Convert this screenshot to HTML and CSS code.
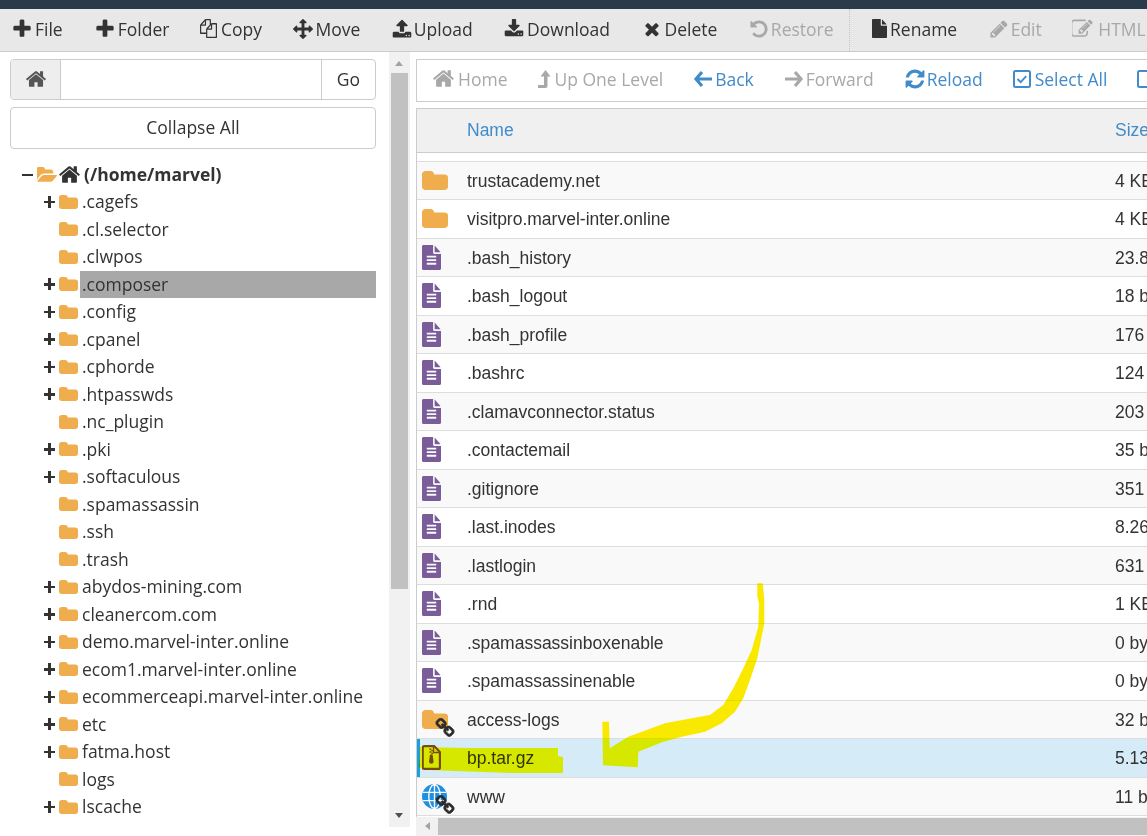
FILE: index.html
```html
<!DOCTYPE html>
<html lang="en">
<head>
    <meta charset="UTF-8">
    <meta name="viewport" content="width=device-width, initial-scale=1.0">
    <title>File Manager</title>
    <link rel="stylesheet" href="styles.css">
</head>
<body>

<!-- Icon sprite -->
<svg class="sprite" xmlns="http://www.w3.org/2000/svg">
    <symbol id="i-plus" viewBox="0 0 1792 1792"><path d="M1600 736v192q0 40-28 68t-68 28h-416v416q0 40-28 68t-68 28h-192q-40 0-68-28t-28-68v-416h-416q-40 0-68-28t-28-68v-192q0-40 28-68t68-28h416v-416q0-40 28-68t68-28h192q40 0 68 28t28 68v416h416q40 0 68 28t28 68z"/></symbol>
    <symbol id="i-copy" viewBox="0 0 1792 1792" preserveAspectRatio="none"><path d="M1696 384q40 0 68 28t28 68v1216q0 40-28 68t-68 28h-960q-40 0-68-28t-28-68v-288h-544q-40 0-68-28t-28-68v-672q0-40 20-88t48-76l408-408q28-28 76-48t88-20h416q40 0 68 28t28 68v328q68-40 128-40h416zm-544 213l-299 299h299v-299zm-640-384l-299 299h299v-299zm196 647l316-316v-416h-384v416q0 40-28 68t-68 28h-416v640h512v-256q0-40 20-88t48-76zm956 804v-1152h-384v416q0 40-28 68t-68 28h-416v640h896z"/></symbol>
    <symbol id="i-move" viewBox="0 0 1792 1792"><path d="M1792 896q0 26-19 45l-256 256q-19 19-45 19t-45-19-19-45v-128h-384v384h128q26 0 45 19t19 45-19 45l-256 256q-19 19-45 19t-45-19l-256-256q-19-19-19-45t19-45 45-19h128v-384h-384v128q0 26-19 45t-45 19-45-19l-256-256q-19-19-19-45t19-45l256-256q19-19 45-19t45 19 19 45v128h384v-384h-128q-26 0-45-19t-19-45 19-45l256-256q19-19 45-19t45 19l256 256q19 19 19 45t-19 45-45 19h-128v384h384v-128q0-26 19-45t45-19 45 19l256 256q19 19 19 45z"/></symbol>
    <symbol id="i-upload" viewBox="0 0 1792 1792"><path d="M1344 1472q0-26-19-45t-45-19-45 19-19 45 19 45 45 19 45-19 19-45zm256 0q0-26-19-45t-45-19-45 19-19 45 19 45 45 19 45-19 19-45zm128-224v320q0 40-28 68t-68 28h-1472q-40 0-68-28t-28-68v-320q0-40 28-68t68-28h427q21 56 70.500 92t110.500 36h256q61 0 110.500-36t70.500-92h427q40 0 68 28t28 68zm-325-648q-17 40-59 40h-256v448q0 26-19 45t-45 19h-256q-26 0-45-19t-19-45v-448h-256q-42 0-59-40-17-39 14-69l448-448q18-19 45-19t45 19l448 448q31 30 14 69z"/></symbol>
    <symbol id="i-download" viewBox="0 0 1792 1792"><path d="M1344 1344q0-26-19-45t-45-19-45 19-19 45 19 45 45 19 45-19 19-45zm256 0q0-26-19-45t-45-19-45 19-19 45 19 45 45 19 45-19 19-45zm128-224v320q0 40-28 68t-68 28h-1472q-40 0-68-28t-28-68v-320q0-40 28-68t68-28h465l135 136q58 56 136 56t136-56l136-136h464q40 0 68 28t28 68zm-325-569q17 41-14 70l-448 448q-18 19-45 19t-45-19l-448-448q-31-29-14-70 17-39 59-39h256v-448q0-26 19-45t45-19h256q26 0 45 19t19 45v448h256q42 0 59 39z"/></symbol>
    <symbol id="i-times" viewBox="0 0 1792 1792"><path d="M1490 1322q0 40-28 68l-136 136q-28 28-68 28t-68-28l-294-294-294 294q-28 28-68 28t-68-28l-136-136q-28-28-28-68t28-68l294-294-294-294q-28-28-28-68t28-68l136-136q28-28 68-28t68 28l294 294 294-294q28-28 68-28t68 28l136 136q28 28 28 68t-28 68l-294 294 294 294q28 28 28 68z"/></symbol>
    <symbol id="i-undo" viewBox="0 0 1792 1792"><path d="M1664 896q0 156-61 298t-164 245-245 164-298 61q-172 0-327-72.500t-264-204.500q-7-10-6.500-22.500t8.500-20.500l137-138q10-9 25-9 16 2 23 12 73 95 179 147t225 52q104 0 198.500-40.500t163.500-109.500 109.500-163.500 40.500-198.500-40.500-198.500-109.500-163.500-163.500-109.500-198.500-40.500q-98 0-188 35.500t-160 101.500l137 138q31 30 14 69-17 40-59 40h-448q-26 0-45-19t-19-45v-448q0-42 40-59 39-17 69 14l130 129q107-101 244.500-156.500t284.500-55.500q156 0 298 61t245 164 164 245 61 298z"/></symbol>
    <symbol id="i-file" viewBox="128 0 1536 1792" preserveAspectRatio="none"><path d="M1152 512v-472q22 14 36 28l408 408q14 14 28 36h-472zm-128 32q0 40 28 68t68 28h544v1056q0 40-28 68t-68 28h-1344q-40 0-68-28t-28-68v-1600q0-40 28-68t68-28h800v544z"/></symbol>
    <symbol id="i-pencil" viewBox="0 0 1792 1792"><path d="M491 1536l91-91-235-235-91 91v107h128v128h107zm523-928q0-22-22-22-10 0-17 7l-542 542q-7 7-7 17 0 22 22 22 10 0 17-7l542-542q7-7 7-17zm-54-192l416 416-832 832h-416v-416zm683 96q0 53-37 90l-166 166-416-416 166-165q36-38 90-38 53 0 91 38l235 234q37 39 37 91z"/></symbol>
    <symbol id="i-edit" viewBox="100 100 1800 1600"><path d="M888 1184l116-116-152-152-116 116v56h96v96h56zm440-720q-16-16-33 1l-350 350q-17 17-1 33t33-1l350-350q17-17 1-33zm80 594v190q0 119-84.500 203.500t-203.500 84.500h-832q-119 0-203.500-84.500t-84.500-203.500v-832q0-119 84.500-203.500t203.500-84.500h832q63 0 117 25 15 7 18 23 3 17-9 29l-49 49q-14 14-32 8-23-6-45-6h-832q-66 0-113 47t-47 113v832q0 66 47 113t113 47h832q66 0 113-47t47-113v-126q0-13 9-22l64-64q15-15 35-7t20 29zm-96-738l288 288-672 672h-288v-288zm444 132l-92 92-288-288 92-92q28-28 68-28t68 28l152 152q28 28 28 68t-28 68z"/></symbol>
    <symbol id="i-home" viewBox="0 0 1792 1792"><path d="M1472 992v480q0 26-19 45t-45 19h-384v-384h-256v384h-384q-26 0-45-19t-19-45v-480q0-1 .5-3t.5-3l575-474 575 474q1 2 1 6zm223-69l-62 74q-8 9-21 11h-3q-13 0-21-7l-692-577-692 577q-12 8-24 7-13-2-21-11l-62-74q-8-10-7-23.500t11-21.500l719-599q32-26 76-26t76 26l244 204v-195q0-14 9-23t23-9h192q14 0 23 9t9 23v408l219 182q10 8 11 21.500t-7 23.500z"/></symbol>
    <symbol id="i-level" viewBox="0 0 14 18"><path d="M8.500 0l5 6.500h-3v9.500q0 2-2 2h-7.500v-3h6v-8.500h-3.500z"/></symbol>
    <symbol id="i-left" viewBox="0 0 20 20"><path d="M9 3l-6 7 6 7M4 10h15" fill="none" stroke="currentColor" stroke-width="3.200"/></symbol>
    <symbol id="i-right" viewBox="0 0 20 20"><path d="M11 3l6 7-6 7M16 10h-15" fill="none" stroke="currentColor" stroke-width="3.200"/></symbol>
    <symbol id="i-reload" viewBox="0 0 1792 1792"><path d="M1639 1056q0 5-1 7-64 268-268 434.500t-478 166.500q-146 0-282.500-55t-243.500-157l-129 129q-19 19-45 19t-45-19-19-45v-448q0-26 19-45t45-19h448q26 0 45 19t19 45-19 45l-137 137q71 66 161 102t187 36q134 0 250-65t186-179q11-17 53-117 8-23 30-23h192q13 0 22.500 9.500t9.500 22.500zm25-800v448q0 26-19 45t-45 19h-448q-26 0-45-19t-19-45 19-45l138-138q-148-137-349-137-134 0-250 65t-186 179q-11 17-53 117-8 23-30 23h-199q-13 0-22.500-9.500t-9.500-22.500v-7q65-268 270-434.500t480-166.500q146 0 284 55.500t245 156.500l130-129q19-19 45-19t45 19 19 45z"/></symbol>
    <symbol id="i-check" viewBox="0 0 18 18"><rect x="1" y="1" width="16" height="16" rx="1.500" fill="none" stroke="currentColor" stroke-width="2"/><path d="M4.500 9l3.200 3.200 5.500-6" fill="none" stroke="currentColor" stroke-width="1.800"/></symbol>
    <symbol id="i-square" viewBox="0 0 18 18"><rect x="1" y="1" width="16" height="16" rx="1.500" fill="none" stroke="currentColor" stroke-width="2"/></symbol>
    <symbol id="i-folder" viewBox="64 128 1664 1408" preserveAspectRatio="none"><path d="M1728 608v704q0 92-66 158t-158 66h-1216q-92 0-158-66t-66-158v-960q0-92 66-158t158-66h320q92 0 158 66t66 158v32h672q92 0 158 66t66 158z"/></symbol>
    <symbol id="i-folder-open" viewBox="0 128 1845 1408" preserveAspectRatio="none"><path d="M1845 931q0 35-35 73l-336 396q-43 51-120.500 86.500t-143.500 35.500h-1088q-34 0-60.500-13t-26.500-43q0-35 35-73l336-396q43-51 120.500-86.500t143.500-35.500h1088q34 0 60.500 13t26.500 43zm-343-344v160h-832q-94 0-197 47.500t-164 119.500l-337 396-5 6q0-4-.5-12.500t-.5-12.500v-960q0-92 66-158t158-66h320q92 0 158 66t66 158v32h544q92 0 158 66t66 158z"/></symbol>
    <symbol id="i-doc" viewBox="128 0 1536 1792" preserveAspectRatio="none"><path d="M1596 476q14 14 28 36h-472v-472q22 14 36 28zm-476 164h544v1056q0 40-28 68t-68 28h-1344q-40 0-68-28t-28-68v-1600q0-40 28-68t68-28h800v544q0 40 28 68t68 28zm160 736v-64q0-14-9-23t-23-9h-704q-14 0-23 9t-9 23v64q0 14 9 23t23 9h704q14 0 23-9t9-23zm0-256v-64q0-14-9-23t-23-9h-704q-14 0-23 9t-9 23v64q0 14 9 23t23 9h704q14 0 23-9t9-23zm0-256v-64q0-14-9-23t-23-9h-704q-14 0-23 9t-9 23v64q0 14 9 23t23 9h704q14 0 23-9t9-23z"/></symbol>
    <symbol id="i-link" viewBox="0 0 1792 1792"><path stroke="currentColor" stroke-width="70" d="M1520 1216q0-40-28-68l-208-208q-28-28-68-28-42 0-72 32 3 3 19 18.500t21.500 21.500 15 19 13 25.500 3.500 27.500q0 40-28 68t-68 28q-15 0-27.500-3.500t-25.500-13-19-15-21.500-21.500-18.500-19q-33 31-33 73 0 40 28 68l206 207q27 27 68 27 40 0 68-26l147-146q28-28 28-67zm-703-705q0-40-28-68l-206-207q-28-28-68-28-39 0-68 27l-147 146q-28 28-28 67 0 40 28 68l208 208q27 27 68 27 42 0 72-31-3-3-19-18.500t-21.500-21.500-15-19-13-25.500-3.500-27.500q0-40 28-68t68-28q15 0 27.500 3.500t25.500 13 19 15 21.500 21.500 18.500 19q33-31 33-73zm895 705q0 120-85 203l-147 146q-83 83-203 83-121 0-204-85l-206-207q-83-83-83-203 0-123 88-209l-88-88q-86 88-208 88-120 0-204-84l-208-208q-84-84-84-204t85-203l147-146q83-83 203-83 121 0 204 85l206 207q83 83 83 203 0 123-88 209l88 88q86-88 208-88 120 0 204 84l208 208q84 84 84 204z"/></symbol>
    <symbol id="i-globe" viewBox="0 0 24 24"><circle cx="12" cy="12" r="12"/><g fill="none" stroke="#fff" stroke-width="1.300"><ellipse cx="12" cy="12" rx="5.500" ry="11.500"/><path d="M12 0v24M1 8h22M1 16h22"/></g></symbol>
    <symbol id="i-zip" viewBox="0 0 19 25"><path d="M2.200 1.100h10l5.700 6v15.300a1.500 1.500 0 0 1-1.500 1.500h-14.200a1.500 1.500 0 0 1-1.500-1.500v-19.800a1.500 1.500 0 0 1 1.500-1.500z" fill="none" stroke="currentColor" stroke-width="2.200"/><path d="M11.500 1.500v6h6" fill="none" stroke="currentColor" stroke-width="1.400"/><path d="M7.500 3.500h1.800v1.400h-1.800zM9.300 4.900h1.800v1.400h-1.800zM7.500 6.300h1.800v1.400h-1.800zM9.300 7.700h1.800v1.400h-1.800zM8 9.500h2.600l1 7a2.300 2.300 0 0 1-4.600 0z"/></symbol>
</svg>

<div class="topbar"></div>

<div class="toolbar">
    <a class="tool"><svg class="tool-plus"><use href="#i-plus"/></svg>File</a>
    <a class="tool"><svg class="tool-plus"><use href="#i-plus"/></svg>Folder</a>
    <a class="tool gap-4"><svg class="tool-copy"><use href="#i-copy"/></svg>Copy</a>
    <a class="tool"><svg class="tool-icon"><use href="#i-move"/></svg>Move</a>
    <a class="tool"><svg class="tool-icon"><use href="#i-upload"/></svg>Upload</a>
    <a class="tool gap-3"><svg class="tool-icon"><use href="#i-download"/></svg>Download</a>
    <a class="tool gap-3"><svg class="tool-icon"><use href="#i-times"/></svg>Delete</a>
    <a class="tool disabled"><svg class="tool-icon"><use href="#i-undo"/></svg>Restore</a>
    <span class="tool-sep"></span>
    <a class="tool gap-3"><svg class="tool-file"><use href="#i-file"/></svg>Rename</a>
    <a class="tool disabled"><svg class="tool-icon"><use href="#i-pencil"/></svg>Edit</a>
    <a class="tool gap-4 disabled"><svg class="tool-edit"><use href="#i-edit"/></svg>HTML Editor</a>
</div>

<div class="main">
    <div class="sidebar">
        <div class="path-box">
            <span class="path-home"><svg class="home-icon"><use href="#i-home"/></svg></span>
            <span class="path-input"></span>
            <span class="path-go">Go</span>
        </div>
        <div class="collapse-btn">Collapse All</div>

        <!-- Directory tree -->
        <div class="tree">
            <div class="tree-row tree-root"><span class="toggle toggle-open"></span><svg class="tree-folder-open"><use href="#i-folder-open"/></svg><svg class="tree-home"><use href="#i-home"/></svg><span class="tree-label">(/home/marvel)</span></div>
            <div class="tree-row"><span class="toggle"></span><svg class="tree-folder"><use href="#i-folder"/></svg><span class="tree-label">.cagefs</span></div>
            <div class="tree-row"><span class="toggle none"></span><svg class="tree-folder"><use href="#i-folder"/></svg><span class="tree-label">.cl.selector</span></div>
            <div class="tree-row"><span class="toggle none"></span><svg class="tree-folder"><use href="#i-folder"/></svg><span class="tree-label">.clwpos</span></div>
            <div class="tree-row"><span class="toggle"></span><svg class="tree-folder"><use href="#i-folder"/></svg><span class="tree-label selected">.composer</span></div>
            <div class="tree-row"><span class="toggle"></span><svg class="tree-folder"><use href="#i-folder"/></svg><span class="tree-label">.config</span></div>
            <div class="tree-row"><span class="toggle"></span><svg class="tree-folder"><use href="#i-folder"/></svg><span class="tree-label">.cpanel</span></div>
            <div class="tree-row"><span class="toggle"></span><svg class="tree-folder"><use href="#i-folder"/></svg><span class="tree-label">.cphorde</span></div>
            <div class="tree-row"><span class="toggle"></span><svg class="tree-folder"><use href="#i-folder"/></svg><span class="tree-label">.htpasswds</span></div>
            <div class="tree-row"><span class="toggle none"></span><svg class="tree-folder"><use href="#i-folder"/></svg><span class="tree-label">.nc_plugin</span></div>
            <div class="tree-row"><span class="toggle"></span><svg class="tree-folder"><use href="#i-folder"/></svg><span class="tree-label">.pki</span></div>
            <div class="tree-row"><span class="toggle"></span><svg class="tree-folder"><use href="#i-folder"/></svg><span class="tree-label">.softaculous</span></div>
            <div class="tree-row"><span class="toggle none"></span><svg class="tree-folder"><use href="#i-folder"/></svg><span class="tree-label">.spamassassin</span></div>
            <div class="tree-row"><span class="toggle none"></span><svg class="tree-folder"><use href="#i-folder"/></svg><span class="tree-label">.ssh</span></div>
            <div class="tree-row"><span class="toggle none"></span><svg class="tree-folder"><use href="#i-folder"/></svg><span class="tree-label">.trash</span></div>
            <div class="tree-row"><span class="toggle"></span><svg class="tree-folder"><use href="#i-folder"/></svg><span class="tree-label">abydos-mining.com</span></div>
            <div class="tree-row"><span class="toggle"></span><svg class="tree-folder"><use href="#i-folder"/></svg><span class="tree-label">cleanercom.com</span></div>
            <div class="tree-row"><span class="toggle"></span><svg class="tree-folder"><use href="#i-folder"/></svg><span class="tree-label">demo.marvel-inter.online</span></div>
            <div class="tree-row"><span class="toggle"></span><svg class="tree-folder"><use href="#i-folder"/></svg><span class="tree-label">ecom1.marvel-inter.online</span></div>
            <div class="tree-row"><span class="toggle"></span><svg class="tree-folder"><use href="#i-folder"/></svg><span class="tree-label">ecommerceapi.marvel-inter.online</span></div>
            <div class="tree-row"><span class="toggle"></span><svg class="tree-folder"><use href="#i-folder"/></svg><span class="tree-label">etc</span></div>
            <div class="tree-row"><span class="toggle"></span><svg class="tree-folder"><use href="#i-folder"/></svg><span class="tree-label">fatma.host</span></div>
            <div class="tree-row"><span class="toggle none"></span><svg class="tree-folder"><use href="#i-folder"/></svg><span class="tree-label">logs</span></div>
            <div class="tree-row"><span class="toggle"></span><svg class="tree-folder"><use href="#i-folder"/></svg><span class="tree-label">lscache</span></div>
        </div>
    </div>

    <div class="vscroll">
        <span class="arrow-up"></span>
        <span class="vscroll-thumb"></span>
        <span class="arrow-down"></span>
    </div>

    <div class="content">
        <div class="navbar">
            <a class="nav disabled gap-3"><svg class="nav-home"><use href="#i-home"/></svg>Home</a>
            <a class="nav disabled gap-3"><svg class="nav-level"><use href="#i-level"/></svg>Up One Level</a>
            <a class="nav"><svg class="nav-arrow"><use href="#i-left"/></svg>Back</a>
            <a class="nav disabled"><svg class="nav-arrow"><use href="#i-right"/></svg>Forward</a>
            <a class="nav gap-1"><svg class="nav-reload"><use href="#i-reload"/></svg>Reload</a>
            <a class="nav gap-4"><svg class="nav-box"><use href="#i-check"/></svg>Select All</a>
            <a class="nav gap-3"><svg class="nav-box"><use href="#i-square"/></svg>Unselect All</a>
        </div>

        <div class="list-head"><span class="col-name">Name</span><span class="col-size">Size</span></div>

        <!-- File list -->
        <div class="list">
            <div class="row"><span class="col-icon"><svg class="ico-folder"><use href="#i-folder"/></svg></span><span class="col-name">trustacademy.net</span><span class="col-size">4 KB</span></div>
            <div class="row"><span class="col-icon"><svg class="ico-folder"><use href="#i-folder"/></svg></span><span class="col-name">visitpro.marvel-inter.online</span><span class="col-size">4 KB</span></div>
            <div class="row"><span class="col-icon"><svg class="ico-doc"><use href="#i-doc"/></svg></span><span class="col-name">.bash_history</span><span class="col-size">23.81 KB</span></div>
            <div class="row"><span class="col-icon"><svg class="ico-doc"><use href="#i-doc"/></svg></span><span class="col-name">.bash_logout</span><span class="col-size">18 bytes</span></div>
            <div class="row"><span class="col-icon"><svg class="ico-doc"><use href="#i-doc"/></svg></span><span class="col-name">.bash_profile</span><span class="col-size">176 bytes</span></div>
            <div class="row"><span class="col-icon"><svg class="ico-doc"><use href="#i-doc"/></svg></span><span class="col-name">.bashrc</span><span class="col-size">124 bytes</span></div>
            <div class="row"><span class="col-icon"><svg class="ico-doc"><use href="#i-doc"/></svg></span><span class="col-name">.clamavconnector.status</span><span class="col-size">203 bytes</span></div>
            <div class="row"><span class="col-icon"><svg class="ico-doc"><use href="#i-doc"/></svg></span><span class="col-name">.contactemail</span><span class="col-size">35 bytes</span></div>
            <div class="row"><span class="col-icon"><svg class="ico-doc"><use href="#i-doc"/></svg></span><span class="col-name">.gitignore</span><span class="col-size">351 bytes</span></div>
            <div class="row"><span class="col-icon"><svg class="ico-doc"><use href="#i-doc"/></svg></span><span class="col-name">.last.inodes</span><span class="col-size">8.26 KB</span></div>
            <div class="row"><span class="col-icon"><svg class="ico-doc"><use href="#i-doc"/></svg></span><span class="col-name">.lastlogin</span><span class="col-size">631 bytes</span></div>
            <div class="row"><span class="col-icon"><svg class="ico-doc"><use href="#i-doc"/></svg></span><span class="col-name">.rnd</span><span class="col-size">1 KB</span></div>
            <div class="row"><span class="col-icon"><svg class="ico-doc"><use href="#i-doc"/></svg></span><span class="col-name">.spamassassinboxenable</span><span class="col-size">0 bytes</span></div>
            <div class="row"><span class="col-icon"><svg class="ico-doc"><use href="#i-doc"/></svg></span><span class="col-name">.spamassassinenable</span><span class="col-size">0 bytes</span></div>
            <div class="row"><span class="col-icon"><svg class="ico-folder"><use href="#i-folder"/></svg><svg class="ico-link"><use href="#i-link"/></svg></span><span class="col-name">access-logs</span><span class="col-size">32 bytes</span></div>
            <div class="row row-active"><span class="col-icon"><svg class="ico-zip"><use href="#i-zip"/></svg></span><span class="col-name">bp.tar.gz</span><span class="col-size">5.13 GB</span></div>
            <div class="row"><span class="col-icon"><svg class="ico-globe"><use href="#i-globe"/></svg><svg class="ico-link"><use href="#i-link"/></svg></span><span class="col-name">www</span><span class="col-size">11 bytes</span></div>
        </div>

        <div class="hscroll">
            <span class="arrow-left"></span>
            <span class="hscroll-thumb"></span>
        </div>
    </div>
</div>

<!-- Hand drawn highlight on top of the screenshot -->
<svg class="scribble" viewBox="0 0 1147 836">
    <path d="M757.300 583.300L762.700 583.300 764.300 600 764.300 623.300 761 640 757.300 658.300 750 680 743.300 698.300 735 711.700 721.700 723.300 705 731.700 681.700 736.700 663.300 741.700 638.300 751.700 637.700 767.300 615 766 603 765.300 602.300 721.700 609 721.700 609.700 748.300 628.300 736.700 665 723.300 691.700 718.300 710 715 723.300 705 733.300 688.300 743.300 668.300 751.700 650 758.300 626.700 759 603.300 757.300 596.700z"/>
    <path d="M420 747L470 748 558 748 558 756 563 757 563 773 510 773 427 770 419 767 420 757z"/>
</svg>

</body>
</html>
```

FILE: styles.css
```css
* {
    box-sizing: border-box;
}

html, body {
    margin: 0;
    padding: 0;
    height: 836px;
    overflow: hidden;
}

body {
    position: relative;
    font-family: "Open Sans", sans-serif;
    font-size: 17.5px;
    color: #333;
    background-color: #fff;
}

.sprite {
    display: none;
}

svg {
    fill: currentColor;
    flex: none;
}

.topbar {
    height: 9px;
    background-color: #293a4a;
}

/* Top toolbar */
.toolbar {
    display: flex;
    align-items: center;
    height: 42.5px;
    padding: 0 0 2px 11px;
    background-color: #e8e8e8;
    border-bottom: 1px solid #ccc;
    white-space: nowrap;
}

.tool {
    display: flex;
    align-items: center;
    gap: 2px;
    margin-right: 30.5px;
    color: #333;
}

.tool:first-child {
    margin-right: 31px;
}

.tool.gap-3 {
    gap: 3px;
}

.tool.gap-4 {
    gap: 4px;
}

.tool.disabled, .nav.disabled {
    color: #a8a8a8;
}

.tool-icon {
    width: 20px;
    height: 20px;
    margin-left: 1px;
}

.tool-plus {
    width: 22px;
    height: 22px;
}

.tool-copy {
    width: 17px;
    height: 19px;
}

.tool-file {
    width: 15px;
    height: 19px;
}

.tool-edit {
    width: 22px;
    height: 20px;
}

.tool-sep {
    align-self: stretch;
    width: 1px;
    margin: 0 22px -2px -15px;
    border-left: 1px dotted #c4c4c4;
}

.main {
    display: flex;
    height: 784px;
}

/* Left panel */
.sidebar {
    width: 389px;
    flex: none;
    padding: 7px 13px 0 10px;
    overflow: hidden;
}

.path-box {
    display: flex;
    height: 41px;
    border: 1px solid #ccc;
    border-radius: 4px;
    overflow: hidden;
}

.path-home {
    display: flex;
    align-items: center;
    justify-content: center;
    width: 50px;
    color: #555;
    background-color: #eee;
    border-right: 1px solid #ccc;
}

.home-icon {
    width: 22px;
    height: 22px;
}

.path-input {
    flex: 1;
}

.path-go {
    display: flex;
    align-items: center;
    justify-content: center;
    width: 54px;
    border-left: 1px solid #ccc;
}

.collapse-btn {
    height: 42px;
    margin-top: 7px;
    line-height: 39px;
    text-align: center;
    border: 1px solid #ccc;
    border-radius: 4px;
}

.tree {
    margin-top: 13px;
}

.tree-row {
    display: flex;
    align-items: center;
    height: 27.5px;
    padding-left: 33px;
    white-space: nowrap;
}

.tree-root {
    height: 26.5px;
    padding-left: 11px;
    font-weight: bold;
}

.toggle {
    position: relative;
    width: 12px;
    height: 12px;
    margin-right: 4px;
}

.toggle::before {
    content: "";
    position: absolute;
    left: 1px;
    right: 0;
    top: 5px;
    height: 2.5px;
    background-color: #333;
}

.toggle::after {
    content: "";
    position: absolute;
    left: 5px;
    top: 0;
    width: 2.5px;
    height: 12px;
    background-color: #333;
}

.toggle-open::after, .toggle.none::before, .toggle.none::after {
    display: none;
}

.tree-folder {
    width: 19px;
    height: 14px;
    color: #f0ad4e;
}

.tree-folder-open {
    width: 20px;
    height: 15px;
    color: #f0ad4e;
}

.tree-home {
    width: 23px;
    height: 23px;
    margin-left: 1px;
}

.tree-label {
    flex: 1;
    align-self: stretch;
    display: flex;
    align-items: center;
    margin-left: 2px;
    padding: 0 0 0.6px 2px;
}

.tree-root .tree-label {
    margin-left: 1px;
}

.tree-label.selected {
    background-color: #a8a8a8;
}

/* Scrollbars */
.vscroll {
    position: relative;
    width: 21px;
    height: 775px;
    flex: none;
    background-color: #f1f1f1;
}

.vscroll-thumb {
    position: absolute;
    left: 2px;
    top: 21px;
    width: 17px;
    height: 516px;
    background-color: #c1c1c1;
}

.arrow-up, .arrow-down {
    position: absolute;
    left: 6px;
    width: 0;
    height: 0;
    border-left: 4.500px solid transparent;
    border-right: 4.500px solid transparent;
}

.arrow-up {
    top: 9px;
    border-bottom: 5px solid #a3a3a3;
}

.arrow-down {
    bottom: 9px;
    border-top: 5px solid #505050;
}

.hscroll {
    position: relative;
    height: 19px;
    background-color: #f1f1f1;
}

.hscroll-thumb {
    position: absolute;
    left: 22px;
    right: 0;
    top: 1px;
    bottom: 1px;
    background-color: #c1c1c1;
}

.arrow-left {
    position: absolute;
    left: 9px;
    top: 5px;
    width: 0;
    height: 0;
    border-top: 4.500px solid transparent;
    border-bottom: 4.500px solid transparent;
    border-right: 5px solid #a3a3a3;
}

/* Right panel */
.content {
    width: 731px;
    flex: none;
    margin-left: 6px;
    padding-top: 7px;
    overflow: hidden;
}

.navbar {
    display: flex;
    align-items: center;
    height: 43px;
    padding: 0 0 3px 15px;
    border: 1px solid #ccc;
    border-right: none;
    white-space: nowrap;
}

.nav {
    display: flex;
    align-items: center;
    gap: 2px;
    margin-right: 30px;
    color: #428bca;
}

.nav.gap-1 {
    gap: 1px;
}

.nav.gap-3 {
    gap: 3px;
}

.nav.gap-4 {
    gap: 4px;
}

.nav-home {
    width: 23px;
    height: 23px;
}

.nav-level {
    width: 14px;
    height: 18px;
}

.nav-arrow {
    width: 20px;
    height: 20px;
}

.nav-reload {
    width: 22px;
    height: 22px;
}

.nav-box {
    width: 18px;
    height: 18px;
}

.list-head {
    display: flex;
    align-items: center;
    height: 45px;
    margin-top: 6.5px;
    background-color: #f0f0f0;
    border-top: 1px solid #ccc;
    border-bottom: 1px solid #ccc;
    border-left: 1px solid #ccc;
    font-family: "Liberation Sans", Arial, sans-serif;
    color: #428bca;
}

.list-head .col-name {
    margin-left: 50px;
}

.list {
    height: 664px;
    padding-top: 8px;
    overflow: hidden;
    border-left: 1px solid #ccc;
    font-family: "Liberation Sans", Arial, sans-serif;
    color: #333;
}

.row {
    display: flex;
    align-items: center;
    height: 38.5px;
    border-bottom: 1px solid #ddd;
    background-color: #fff;
    white-space: nowrap;
}

.row:first-child {
    height: 39px;
    border-top: 1px solid #ddd;
}

.row .col-name, .row .col-size {
    padding-top: 1.6px;
}

.row:nth-child(odd) {
    background-color: #f9f9f9;
}

.row-active, .row-active:nth-child(odd), .row-active:nth-child(even) {
    background-color: #d6ebf8;
    box-shadow: inset 3px 0 0 #1c9fdc;
}

.col-icon {
    position: relative;
    display: flex;
    align-items: center;
    width: 50px;
    height: 100%;
    flex: none;
    padding-left: 5px;
}

.col-name {
    width: 648px;
    flex: none;
}

.col-size {
    flex: none;
}

.ico-folder {
    width: 26px;
    height: 19px;
    color: #f0ad4e;
}

.ico-doc {
    width: 19px;
    height: 25px;
    color: #7a5c99;
}

.ico-zip {
    width: 19px;
    height: 25px;
    color: #7a4a17;
}

.ico-globe {
    width: 25px;
    height: 25px;
    color: #1f8fe0;
}

.ico-link {
    position: absolute;
    left: 18px;
    top: 17px;
    width: 20px;
    height: 20px;
    color: #2b2b2b;
}

/* Yellow marker */
.scribble {
    position: absolute;
    left: 0;
    top: 0;
    width: 1147px;
    height: 836px;
    fill: #fbe800;
    mix-blend-mode: darken;
    pointer-events: none;
}
```
